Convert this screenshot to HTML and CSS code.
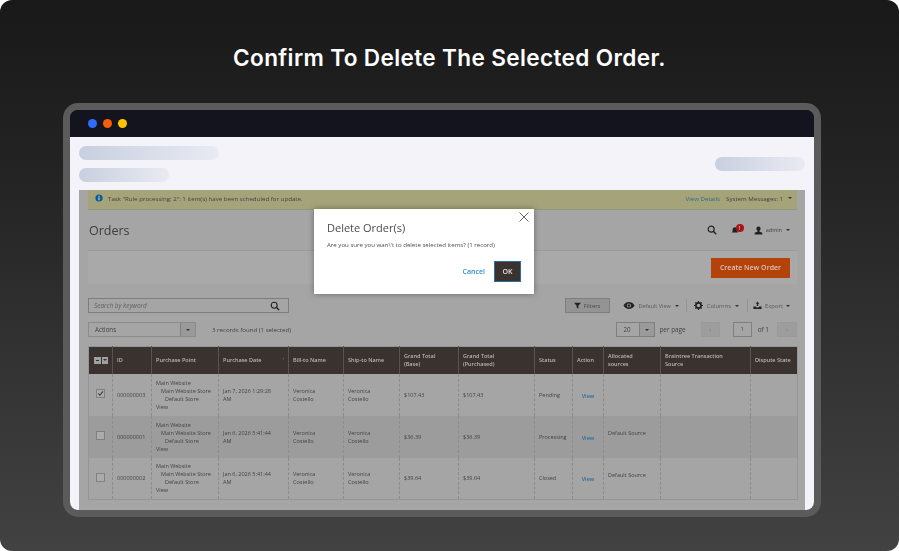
FILE: index.html
```html
<!DOCTYPE html>
<html lang="en">
<head>
  <meta charset="UTF-8">
  <title>Confirm To Delete The Selected Order</title>
  <link rel="stylesheet" href="styles.css">
</head>
<body>
  <div class="card">
    <h1>Confirm To Delete The Selected Order.</h1>
    <div class="window">
      <div class="titlebar">
        <span class="dot dot-blue"></span>
        <span class="dot dot-orange"></span>
        <span class="dot dot-yellow"></span>
      </div>
      <div class="content">
        <div class="skeleton-head">
          <div class="skeleton-left">
            <div class="skeleton skeleton-long"></div>
            <div class="skeleton skeleton-short"></div>
          </div>
          <div class="skeleton skeleton-right"></div>
        </div>
        <div class="shot">
          <div class="notice">
            <svg class="info-icon" viewBox="0 0 10 10"><circle cx="5" cy="5" r="4.5" fill="#0a5c98"/><rect x="4.3" y="4.2" width="1.4" height="3.6" fill="#d8d8c0"/><rect x="4.3" y="2.2" width="1.4" height="1.3" fill="#d8d8c0"/></svg>
            <span class="notice-text">Task "Rule processing: 2": 1 item(s) have been scheduled for update.</span>
            <a class="notice-link">View Details</a>
            <span class="notice-msg">System Messages: 1</span>
            <span class="caret"></span>
          </div>

          <div class="page-head">
            <h2>Orders</h2>
            <div class="head-actions">
              <svg class="search-icon" viewBox="0 0 12 12"><circle cx="5" cy="5" r="3.6" fill="none" stroke="#222" stroke-width="1.4"/><path d="M7.6 7.6 L11 11" stroke="#222" stroke-width="1.7"/></svg>
              <span class="bell">
                <svg viewBox="0 0 10 10"><path d="M5 1.5c-2 0-3 1.400-3 3.200v2L1 8h8L8 6.700V4.700C8 2.900 7 1.500 5 1.500z" fill="#222"/></svg>
                <span class="bell-badge">1</span>
              </span>
              <span class="admin">
                <svg viewBox="0 0 10 10"><path d="M5 0.500c-1.500 0-2.300 1-2.300 2.500 0 1.200 0.600 2 1.300 2.400v0.800L0.800 7.500V9.500h8.400V7.500L6 6.200v-0.800C6.700 5 7.300 4.200 7.300 3c0-1.500-0.800-2.500-2.300-2.500z" fill="#222"/></svg>
                admin
              </span>
              <span class="caret"></span>
            </div>
          </div>

          <div class="action-band">
            <button class="create-btn">Create New Order</button>
          </div>

          <div class="tools">
            <div class="search-box">
              <span>Search by keyword</span>
              <svg viewBox="0 0 12 12"><circle cx="5" cy="5" r="3.600" fill="none" stroke="#222" stroke-width="1.300"/><path d="M7.600 7.600 L11 11" stroke="#222" stroke-width="1.600"/></svg>
            </div>
            <div class="tool-right">
              <button class="filters-btn">
                <svg viewBox="0 0 10 10"><path d="M0 1h10L6.200 5.200V9.500L3.800 8V5.200z" fill="#222"/></svg>
                Filters
              </button>
              <span class="tool-item tool-view">
                <svg class="eye" viewBox="0 0 14 10"><path d="M0.500 5C2 2.200 4.500 1 7 1s5 1.200 6.500 4C12 7.800 9.500 9 7 9S2 7.800 0.500 5z" fill="#222"/><circle cx="7" cy="5" r="2.400" fill="#a5a5a5"/><circle cx="7" cy="5" r="1.400" fill="#222"/></svg>
                Default View <span class="caret"></span>
              </span>
              <span class="tool-item tool-columns">
                <svg viewBox="0 0 10 10"><circle cx="5" cy="5" r="2.900" fill="none" stroke="#222" stroke-width="1.800"/><path d="M5 0v2M5 8v2M0 5h2M8 5h2M1.500 1.500l1.400 1.400M7.100 7.100l1.400 1.400M1.500 8.500l1.400-1.400M7.100 2.900l1.400-1.400" stroke="#222" stroke-width="1.300"/></svg>
                Columns <span class="caret"></span>
              </span>
              <span class="tool-item tool-export">
                <svg viewBox="0 0 10 10"><path d="M0.500 6h2.500l1 1.200h2L7 6h2.500v3h-9z" fill="#222"/><path d="M5 0.500 7 3H5.700v2.500H4.300V3H3z" fill="#222"/></svg>
                Export <span class="caret"></span>
              </span>
            </div>
          </div>

          <div class="tools tools-second">
            <div class="select select-actions">
              <span class="select-label">Actions</span>
              <span class="select-arrow"><span class="caret"></span></span>
            </div>
            <span class="records">3 records found (1 selected)</span>
            <div class="pager">
              <div class="select select-page">
                <span class="select-label">20</span>
                <span class="select-arrow"><span class="caret"></span></span>
              </div>
              <span class="per-page">per page</span>
              <span class="page-btn page-prev">&#8249;</span>
              <span class="page-num">1</span>
              <span class="page-of">of 1</span>
              <span class="page-btn page-next">&#8250;</span>
            </div>
          </div>

          <table class="orders">
            <colgroup>
              <col><col><col><col><col><col><col><col><col><col><col><col><col>
            </colgroup>
            <thead>
              <tr>
                <th class="th-check"><span class="head-check"><i><b></b></i><i><span class="caret"></span></i></span></th>
                <th>ID</th>
                <th>Purchase Point</th>
                <th class="th-sorted">Purchase Date<span class="sort-mark">&#8593;</span></th>
                <th>Bill-to Name</th>
                <th>Ship-to Name</th>
                <th>Grand Total<br>(Base)</th>
                <th>Grand Total<br>(Purchased)</th>
                <th>Status</th>
                <th>Action</th>
                <th>Allocated<br>sources</th>
                <th>Braintree Transaction<br>Source</th>
                <th>Dispute State</th>
              </tr>
            </thead>
            <tbody>
              <tr>
                <td class="td-check"><span class="check checked"><svg viewBox="0 0 8 8"><path d="M1.500 4 L3.300 6 L6.800 1.500" fill="none" stroke="#333" stroke-width="1.200"/></svg></span></td>
                <td>000000003</td>
                <td><div class="store">Main Website<span class="lvl-1">Main Website Store</span><span class="lvl-2">Default Store</span>View</div></td>
                <td>Jan 7, 2026 1:29:28<br>AM</td>
                <td>Veronica<br>Costello</td>
                <td>Veronica<br>Costello</td>
                <td>$107.43</td>
                <td>$107.43</td>
                <td>Pending</td>
                <td class="td-action"><a>View</a></td>
                <td></td>
                <td></td>
                <td></td>
              </tr>
              <tr class="row-shaded">
                <td class="td-check"><span class="check"></span></td>
                <td>000000001</td>
                <td><div class="store">Main Website<span class="lvl-1">Main Website Store</span><span class="lvl-2">Default Store</span>View</div></td>
                <td>Jan 6, 2026 5:41:44<br>AM</td>
                <td>Veronica<br>Costello</td>
                <td>Veronica<br>Costello</td>
                <td>$36.39</td>
                <td>$36.39</td>
                <td>Processing</td>
                <td class="td-action"><a>View</a></td>
                <td class="td-source">Default Source</td>
                <td></td>
                <td></td>
              </tr>
              <tr>
                <td class="td-check"><span class="check"></span></td>
                <td>000000002</td>
                <td><div class="store">Main Website<span class="lvl-1">Main Website Store</span><span class="lvl-2">Default Store</span>View</div></td>
                <td>Jan 6, 2026 5:41:44<br>AM</td>
                <td>Veronica<br>Costello</td>
                <td>Veronica<br>Costello</td>
                <td>$39.64</td>
                <td>$39.64</td>
                <td>Closed</td>
                <td class="td-action"><a>View</a></td>
                <td class="td-source">Default Source</td>
                <td></td>
                <td></td>
              </tr>
            </tbody>
          </table>

          <div class="modal">
            <svg class="modal-close" viewBox="0 0 10 10"><path d="M0.500 0.500 L9.500 9.500 M9.500 0.500 L0.500 9.500" stroke="#555" stroke-width="0.900"/></svg>
            <div class="modal-title">Delete Order(s)</div>
            <div class="modal-text">Are you sure you wan\'t to delete selected items? (1 record)</div>
            <div class="modal-actions">
              <a class="modal-cancel">Cancel</a>
              <button class="modal-ok">OK</button>
            </div>
          </div>
        </div>
      </div>
    </div>
  </div>
</body>
</html>
```

FILE: styles.css
```css
html, body {
  margin: 0;
  padding: 0;
  background: #fff;
}

.card {
  width: 899px;
  height: 551px;
  box-sizing: border-box;
  padding-top: 43px;
  border-radius: 12px;
  overflow: hidden;
  background: linear-gradient(180deg, #191919 0%, #232323 30%, #424242 100%);
}

h1 {
  margin: 0 0 37px;
  height: 23px;
  line-height: 30px;
  text-align: center;
  font-family: "Inter", sans-serif;
  font-size: 22.6px;
  font-weight: 600;
  letter-spacing: 0.35px;
  color: #fff;
}

.window {
  width: 744px;
  height: 400px;
  margin-left: 63px;
  border: 7px solid #5b5b5b;
  border-radius: 15px;
  overflow: hidden;
  display: flex;
  flex-direction: column;
}

.titlebar {
  flex: none;
  height: 27px;
  display: flex;
  align-items: center;
  gap: 6px;
  padding-left: 18px;
  background: #14141f;
}
.dot {
  width: 9px;
  height: 9px;
  border-radius: 50%;
}
.dot-blue { background: #2f6bff; }
.dot-orange { background: #f55f07; }
.dot-yellow { background: #fdc500; }

.content {
  flex: 1;
  min-height: 0;
  display: flex;
  flex-direction: column;
  padding: 0 9px;
  background: #f3f3f9;
}

.skeleton-head {
  flex: none;
  height: 53px;
  display: flex;
  justify-content: space-between;
}
.skeleton-left {
  display: flex;
  flex-direction: column;
  gap: 8px;
  padding-top: 9px;
}
.skeleton {
  height: 14px;
  border-radius: 7px;
  background: linear-gradient(90deg, #c8cfde 0%, #e9ebf3 100%);
}
.skeleton-long { width: 140px; }
.skeleton-short { width: 90px; }
.skeleton-right { width: 90px; margin-top: 20px; }

.shot {
  flex: 1;
  min-height: 0;
  position: relative;
  overflow: hidden;
  padding: 0 8px 0 9px;
  background: #a5a5a5;
  font-family: "Open Sans", sans-serif;
  font-size: 5.5px;
  color: #434343;
  filter: blur(0.35px);
}

.caret {
  display: inline-block;
  width: 0;
  height: 0;
  border-left: 2px solid transparent;
  border-right: 2px solid transparent;
  border-top: 2.5px solid #333;
}

.notice {
  height: 19px;
  box-sizing: content-box;
  display: flex;
  align-items: center;
  padding: 0 5px 0 7px;
  background: #a5a37a;
  border-bottom: 1px solid #95957a;
  font-size: 6.15px;
}
.info-icon {
  width: 8px;
  height: 8px;
  margin: 0 5px 3px 0;
}
.notice-text {
  flex: 1;
  padding-bottom: 3px;
}
.notice-link {
  color: #2c6a86;
  margin: 0 6px 3px 0;
}
.notice-msg {
  margin: 0 5px 3px 0;
}
.notice .caret {
  margin-bottom: 3px;
}

.page-head {
  height: 40px;
  display: flex;
  align-items: center;
  justify-content: space-between;
  padding: 0 7px 0 1px;
}
h2 {
  margin: 0;
  font-size: 12.5px;
  font-weight: 400;
  color: #3d3d3d;
}
.head-actions {
  display: flex;
  align-items: center;
}
.search-icon {
  width: 10px;
  height: 10px;
  margin-right: 14px;
}
.bell {
  position: relative;
  width: 14px;
  height: 10px;
  margin-right: 9px;
}
.bell svg {
  width: 8px;
  height: 8px;
  margin-top: 1px;
}
.bell-badge {
  position: absolute;
  left: 5px;
  top: -1px;
  width: 8px;
  height: 8px;
  border-radius: 50%;
  background: #a8141c;
  color: #ddd;
  font-size: 5px;
  line-height: 8px;
  text-align: center;
}
.admin {
  display: flex;
  align-items: center;
  gap: 3px;
  margin-right: 4px;
  font-size: 5.5px;
}
.admin svg {
  width: 9px;
  height: 9px;
}

.action-band {
  height: 33px;
  display: flex;
  align-items: center;
  justify-content: flex-end;
  padding-right: 7px;
  border-top: 1px solid #9a9a9a;
  background: #a9a9a9;
}
.create-btn {
  width: 79px;
  height: 20px;
  padding: 0;
  border: none;
  background: #b3430b;
  color: #dcc6b8;
  font-family: inherit;
  font-size: 7px;
  font-weight: 600;
}

.tools {
  height: 15px;
  margin-top: 14px;
  display: flex;
  align-items: center;
  justify-content: space-between;
}
.tools-second {
  margin-top: 9px;
  justify-content: flex-start;
}

.search-box {
  width: 186px;
  height: 13px;
  display: flex;
  align-items: center;
  justify-content: space-between;
  padding: 0 8px 0 5px;
  border: 1px solid #7d7d7d;
  font-size: 6.4px;
  font-style: italic;
  color: #5f5f5f;
}
.search-box svg {
  width: 10px;
  height: 10px;
}

.tool-right {
  display: flex;
  align-items: center;
  padding-right: 7px;
  color: #5a5a5a;
  font-size: 5.9px;
}
.filters-btn {
  width: 45px;
  height: 15px;
  display: flex;
  align-items: center;
  justify-content: center;
  gap: 3px;
  padding: 0;
  border: 1px solid #7e7e7e;
  background: #949494;
  color: #4b4b4b;
  font-family: inherit;
  font-size: 5.9px;
}
.filters-btn svg {
  width: 7px;
  height: 7px;
}
.tool-item {
  display: flex;
  align-items: center;
  gap: 4px;
  height: 13px;
}
.tool-item svg {
  width: 9px;
  height: 9px;
}
.tool-item svg.eye {
  width: 12px;
}
.tool-view {
  margin-left: 13px;
  padding-right: 7px;
  border-right: 1px solid #939393;
  font-size: 5.5px;
}
.tool-columns {
  padding: 0 8px 0 7px;
  border-right: 1px solid #939393;
}
.tool-export {
  padding-left: 5px;
  gap: 3px;
}

.select {
  height: 13px;
  display: flex;
  align-items: center;
  border: 1px solid #7f7f7f;
}
.select-actions {
  width: 106px;
  border-color: #8c8c8c;
}
.select-page {
  width: 37px;
}
.select-label {
  flex: 1;
  padding-left: 6px;
  font-size: 6.2px;
}
.select-arrow {
  width: 14px;
  height: 13px;
  display: flex;
  align-items: center;
  justify-content: center;
  border-left: 1px solid #7f7f7f;
  background: #9a9a9a;
}
.records {
  margin-left: 16px;
  font-size: 6.1px;
}
.pager {
  margin-left: auto;
  display: flex;
  align-items: center;
}
.per-page {
  margin: 0 15px 0 4px;
  font-size: 6.4px;
}
.page-btn {
  width: 19px;
  height: 15px;
  box-sizing: border-box;
  border: 1px solid #9a9a9a;
  background: #9d9d9d;
  text-align: center;
  color: #7c7c7c;
  font-size: 8px;
  line-height: 12px;
}
.page-next {
  width: 20px;
}
.page-num {
  width: 19px;
  height: 15px;
  box-sizing: border-box;
  margin-left: 13px;
  border: 1px solid #7f7f7f;
  text-align: center;
  line-height: 13px;
}
.page-of {
  margin: 0 8px 0 6px;
  font-size: 6.4px;
}

.orders {
  width: 709px;
  margin-top: 9px;
  table-layout: fixed;
  border-collapse: collapse;
  border: 1px solid #959595;
}
.orders col:nth-child(1) { width: 24px; }
.orders col:nth-child(2) { width: 39px; }
.orders col:nth-child(3) { width: 67px; }
.orders col:nth-child(4) { width: 70px; }
.orders col:nth-child(5) { width: 55px; }
.orders col:nth-child(6) { width: 56px; }
.orders col:nth-child(7) { width: 59px; }
.orders col:nth-child(8) { width: 76px; }
.orders col:nth-child(9) { width: 38px; }
.orders col:nth-child(10) { width: 31px; }
.orders col:nth-child(11) { width: 57px; }
.orders col:nth-child(12) { width: 90px; }
.orders col:nth-child(13) { width: 47px; }
.orders th {
  height: 27px;
  box-sizing: border-box;
  padding: 0 4px;
  background: #39322e;
  border-left: 1px solid #5a5450;
  color: #bdb8b4;
  font-weight: 600;
  font-size: 5.5px;
  line-height: 8px;
  text-align: left;
  vertical-align: middle;
}
.orders th.th-check {
  padding: 0 5px;
}
.th-sorted {
  position: relative;
}
.sort-mark {
  position: absolute;
  right: 4px;
  top: 8px;
  font-size: 4px;
  font-weight: 400;
}
.head-check {
  display: flex;
  gap: 1px;
  width: 14px;
}
.head-check i {
  flex: 1;
  height: 7px;
  display: flex;
  align-items: center;
  justify-content: center;
  background: #a0a0a0;
}
.head-check b {
  width: 3px;
  height: 1px;
  background: #333;
}
.orders td {
  height: 42px;
  box-sizing: border-box;
  padding: 0 4px;
  border-left: 1px dashed #8c8c8c;
  font-size: 5.5px;
  line-height: 8px;
  vertical-align: middle;
}
.orders td:first-child,
.orders th:first-child {
  border-left: none;
}
.row-shaded td {
  background: #9c9c9c;
}
.td-check {
  text-align: center;
}
.check {
  display: inline-block;
  width: 7px;
  height: 7px;
  border: 1px solid #808080;
  background: #ababab;
}
.check svg {
  display: block;
  width: 7px;
  height: 7px;
}
.store span {
  display: block;
}
.lvl-1 { padding-left: 5px; }
.lvl-2 { padding-left: 9px; }
.orders .td-action {
  padding-top: 2px;
  text-align: center;
}
.td-action a {
  color: #2a6f9f;
  font-weight: 600;
}
.orders .td-source {
  padding-bottom: 7px;
}

.modal {
  position: absolute;
  left: 235px;
  top: 19px;
  width: 220px;
  height: 85px;
  box-sizing: border-box;
  padding: 11px 13px 0;
  background: #fff;
  box-shadow: 0 0 6px rgba(0, 0, 0, 0.35);
  color: #4d4d4d;
}
.modal-close {
  position: absolute;
  right: 5px;
  top: 3px;
  width: 10px;
  height: 10px;
}
.modal-title {
  font-size: 11px;
  line-height: 15px;
}
.modal-text {
  margin-top: 5px;
  font-size: 6.1px;
  line-height: 9px;
}
.modal-actions {
  margin-top: 12px;
  display: flex;
  align-items: center;
  justify-content: flex-end;
  gap: 9px;
}
.modal-cancel {
  color: #2a8ee0;
  font-size: 7px;
  font-weight: 600;
  margin-bottom: 1px;
}
.modal-ok {
  width: 27px;
  height: 21px;
  padding: 0;
  border: 1px solid #2a6f9f;
  background: #39322e;
  color: #e6e2de;
  font-family: inherit;
  font-size: 7px;
  font-weight: 600;
}
```
